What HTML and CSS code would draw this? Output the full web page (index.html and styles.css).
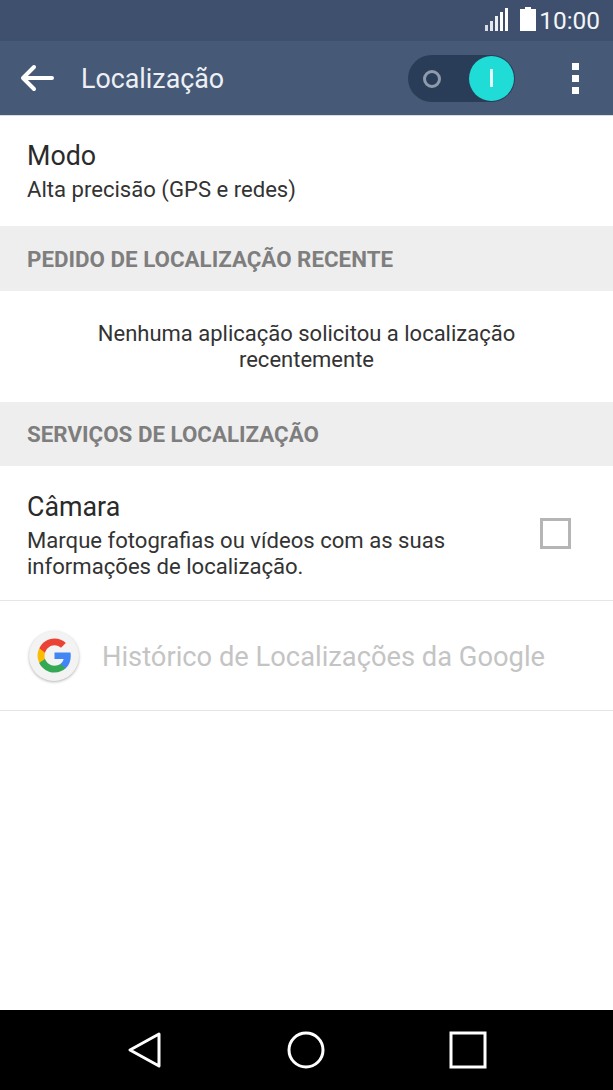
FILE: index.html
```html
<!DOCTYPE html>
<html lang="pt">
<head>
<meta charset="utf-8">
<title>Localização</title>
<link rel="stylesheet" href="styles.css">
</head>
<body>
<div class="screen">
  <div class="status">
    <svg class="signal" width="24" height="24" viewBox="0 0 24 24"><g fill="#fff"><rect x="0" y="18" width="3" height="6" opacity=".8"/><rect x="5" y="14" width="3" height="10" opacity=".85"/><rect x="10" y="9" width="3" height="15" opacity=".9"/><rect x="15" y="5" width="3" height="19"/><rect x="20" y="1" width="3" height="23"/></g></svg>
    <svg class="battery" width="16" height="24" viewBox="0 0 16 24"><path fill="#fff" d="M5 0h6v2h5v22H0V2h5z"/></svg>
    <span class="time">10:00</span>
  </div>
  <header class="appbar">
    <svg class="back" width="34" height="28" viewBox="0 0 34 28"><path fill="none" stroke="#fff" stroke-width="4" stroke-linecap="round" stroke-linejoin="round" d="M32 14H4M14 3 3 14l11 11"/></svg>
    <h1 class="title">Localização</h1>
    <div class="toggle">
      <span class="toggle-off"></span>
      <span class="toggle-knob"><span class="toggle-bar"></span></span>
    </div>
    <div class="dots"><span></span><span></span><span></span></div>
  </header>
  <main class="content">
    <section class="row row-mode">
      <div class="row-title">Modo</div>
      <div class="row-sub">Alta precisão (GPS e redes)</div>
    </section>
    <div class="section section-a">PEDIDO DE LOCALIZAÇÃO RECENTE</div>
    <div class="empty">Nenhuma aplicação solicitou a localização<br>recentemente</div>
    <div class="section section-b">SERVIÇOS DE LOCALIZAÇÃO</div>
    <section class="row row-camera">
      <div class="row-text">
        <div class="row-title">Câmara</div>
        <div class="row-sub">Marque fotografias ou vídeos com as suas<br>informações de localização.</div>
      </div>
      <span class="checkbox"></span>
    </section>
    <section class="row row-google">
      <span class="g-badge">
        <svg width="37" height="37" viewBox="0 0 48 48">
          <path fill="#4285F4" d="M45.1 24.5c0-1.6-.1-3.1-.4-4.5H24v8.5h11.8c-.5 2.7-2 5-4.4 6.6v5.5h7.1c4.2-3.8 6.6-9.5 6.6-16.1z"/>
          <path fill="#34A853" d="M24 46c5.9 0 10.9-2 14.5-5.4l-7.1-5.5c-2 1.3-4.5 2.1-7.4 2.1-5.7 0-10.6-3.9-12.3-9H4.3v5.7C7.9 40.9 15.4 46 24 46z"/>
          <path fill="#FBBC05" d="M11.7 28.7c-.4-1.3-.7-2.7-.7-4.2s.3-2.9.7-4.2v-5.7H4.3C2.8 17.6 2 20.7 2 24s.8 6.4 2.3 9.4z"/>
          <path fill="#EA4335" d="M24 10.8c3.2 0 6.1 1.1 8.4 3.3l6.3-6.3C34.9 4.2 29.9 2 24 2 15.4 2 7.9 7.1 4.3 14.6l7.4 5.7c1.7-5.1 6.6-9.5 12.3-9.5z"/>
        </svg>
      </span>
      <span class="google-label">Histórico de Localizações da Google</span>
    </section>
  </main>
  <nav class="navbar">
    <svg width="36" height="38" viewBox="0 0 36 38"><path fill="none" stroke="#fff" stroke-width="3" stroke-linejoin="round" d="M32 3 3 19l29 16z"/></svg>
    <svg width="38" height="38" viewBox="0 0 38 38"><circle cx="19" cy="19" r="17" fill="none" stroke="#fff" stroke-width="3"/></svg>
    <svg width="38" height="38" viewBox="0 0 38 38"><rect x="2" y="2" width="34" height="34" fill="none" stroke="#fff" stroke-width="3"/></svg>
  </nav>
</div>
</body>
</html>
```
FILE: styles.css
```css
* { box-sizing: border-box; }
html, body { margin: 0; padding: 0; }
body { background: #fff; font-family: Roboto, "Liberation Sans", sans-serif; }
.screen { width: 613px; height: 1090px; display: flex; flex-direction: column; overflow: hidden; }
.status { height: 41px; background: #3f4f6e; display: flex; align-items: center; justify-content: flex-end; padding-right: 13px; padding-bottom: 1px; color: #fff; }
.signal { margin-right: 11px; margin-bottom: 3px; }
.battery { margin-right: 3px; margin-bottom: 3px; }
.time { font-size: 24.4px; line-height: 41px; color: #f4f5f7; }
.appbar { height: 75px; background: #465a78; display: flex; align-items: center; border-bottom: 1px solid #d8dbe0; }
.back { margin-left: 20px; margin-right: 27px; }
.title { margin: 0; flex: 1; padding-top: 2px; font-size: 26.8px; font-weight: 400; color: #eef0f4; }
.toggle { width: 107px; height: 47px; border-radius: 24px; background: #2a3d58; position: relative; margin-right: 57px; }
.toggle-off { position: absolute; left: 15px; top: 15px; width: 18px; height: 18px; border-radius: 50%; border: 3px solid #8f9bac; }
.toggle-knob { position: absolute; right: 1px; top: 1px; width: 45px; height: 45px; border-radius: 50%; background: #1fdcd6; display: flex; align-items: center; justify-content: center; }
.toggle-bar { width: 3px; height: 18px; background: #e4faf9; }
.dots { display: flex; flex-direction: column; gap: 5px; margin-right: 34px; }
.dots span { width: 7px; height: 7px; background: #fff; }
.content { flex: 1; display: flex; flex-direction: column; }
.row { padding-left: 27px; padding-right: 27px; }
.row-mode { height: 110px; padding-top: 25px; }
.row-title { font-size: 26.8px; line-height: 31px; color: #2a2a2a; }
.row-sub { font-size: 22.1px; line-height: 26px; color: #333; margin-top: 4px; }
.section { background: #eeeeee; padding-left: 27px; font-size: 22.35px; font-weight: 700; color: #7e7e7e; display: flex; align-items: center; }
.section-a { height: 65px; }
.section-b { height: 64px; }
.empty { height: 111px; padding-top: 30px; text-align: center; font-size: 22px; line-height: 26px; color: #333; }
.row-camera { height: 135px; display: flex; align-items: center; justify-content: space-between; border-bottom: 1px solid #e6e6e6; padding-right: 42px; }
.row-camera .row-text { margin-top: 5px; }
.checkbox { width: 31px; height: 31px; border: 3px solid #b5b5b5; }
.row-google { height: 110px; display: flex; align-items: center; border-bottom: 1px solid #e6e6e6; }
.g-badge { width: 50px; height: 50px; margin-left: 2px; margin-right: 23px; border-radius: 50%; background: #f3f3f3; box-shadow: 0 1px 3px rgba(0,0,0,.3); display: flex; align-items: center; justify-content: center; flex: none; }
.google-label { font-size: 27.3px; color: #c4c4c4; white-space: nowrap; padding-top: 2px; }
.navbar { height: 80px; background: #000; display: flex; align-items: center; justify-content: space-between; padding: 0 126px 0 127px; }
```
